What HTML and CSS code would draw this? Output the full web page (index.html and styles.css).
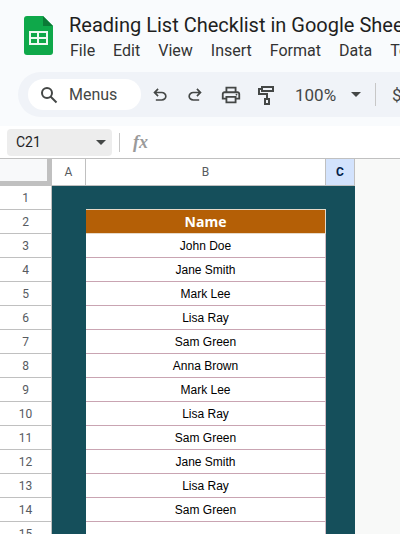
FILE: index.html
```html
<!DOCTYPE html>
<html lang="en">
<head>
  <meta charset="UTF-8">
  <meta name="viewport" content="width=device-width, initial-scale=1.0">
  <title>Reading List Checklist in Google Sheets</title>
  <link rel="stylesheet" href="styles.css">
</head>
<body>

<header class="header">
  <svg class="logo" viewBox="0 0 29 39" aria-hidden="true">
    <path fill="#0fa84a" d="M3 0h16l10 10v26a3 3 0 0 1-3 3H3a3 3 0 0 1-3-3V3a3 3 0 0 1 3-3z"/>
    <path fill="#0b7a36" d="M19 0l10 10H19z"/>
    <path fill="#effaf2" fill-rule="evenodd" d="M5 15h19v14H5zM7 17v4h6v-4zM15 17v4h7v-4zM7 23v4h6v-4zM15 23v4h7v-4z"/>
  </svg>
  <div class="heading">
    <h1 class="title">Reading List Checklist in Google Sheets</h1>
    <nav class="menu">
      <a href="#">File</a>
      <a href="#">Edit</a>
      <a href="#">View</a>
      <a href="#">Insert</a>
      <a href="#">Format</a>
      <a href="#">Data</a>
      <a href="#">Tools</a>
    </nav>
  </div>
</header>

<div class="toolbar">
  <button class="menus" type="button">
    <svg width="18" height="18" viewBox="0 0 18 18" fill="none" stroke="#444746" stroke-width="2" aria-hidden="true">
      <circle cx="7" cy="7" r="5"/>
      <path d="M10.500 10.500L16.500 16.500"/>
    </svg>
    Menus
  </button>
  <button class="tool" type="button" aria-label="Undo">
    <svg width="20" height="20" viewBox="0 -960 960 960"><path d="M280-200v-80h284q63 0 109.500-40T720-420q0-60-46.500-100T564-560H312l104 104-56 56-200-200 200-200 56 56-104 104h252q97 0 166.500 63T800-420q0 94-69.500 157T564-200H280Z"/></svg>
  </button>
  <button class="tool" type="button" aria-label="Redo">
    <svg width="20" height="20" viewBox="0 -960 960 960"><path transform="matrix(-1 0 0 1 960 0)" d="M280-200v-80h284q63 0 109.500-40T720-420q0-60-46.500-100T564-560H312l104 104-56 56-200-200 200-200 56 56-104 104h252q97 0 166.500 63T800-420q0 94-69.500 157T564-200H280Z"/></svg>
  </button>
  <button class="tool" type="button" aria-label="Print">
    <svg width="22" height="22" viewBox="0 -960 960 960"><path d="M640-640v-120H320v120h-80v-200h480v200h-80Zm80 180q17 0 28.500-11.500T760-500q0-17-11.500-28.500T720-540q-17 0-28.500 11.500T680-500q0 17 11.500 28.500T720-460Zm-80 260v-160H320v160h320Zm80 80H240v-160H80v-240q0-51 35-85.500t85-34.500h560q51 0 85.500 34.500T880-520v240H720v160Zm80-240v-160q0-17-11.500-28.500T760-560H200q-17 0-28.500 11.500T160-520v160h80v-80h480v80h80Z"/></svg>
  </button>
  <button class="tool" type="button" aria-label="Paint format">
    <svg width="18" height="22" viewBox="0 0 18 22"><path class="line" d="M5 3h11v4H5zM5 5H2v5h8v4M8 15h4v5H8z"/></svg>
  </button>
  <select class="zoom" aria-label="Zoom">
    <option>100%</option>
  </select>
  <svg class="arrow" width="10" height="5" viewBox="0 0 10 5" aria-hidden="true"><path d="M0 0h10L5 5z"/></svg>
  <span class="divider"></span>
  <button class="tool currency" type="button">$</button>
</div>

<div class="formula-bar">
  <div class="name-box">
    <input type="text" value="C21" aria-label="Name box">
    <button type="button" aria-label="Named ranges">
      <svg width="10" height="5" viewBox="0 0 10 5"><path d="M0 0h10L5 5z"/></svg>
    </button>
  </div>
  <span class="divider"></span>
  <span class="fx">fx</span>
</div>

<div class="grid">
  <table class="sheet">
    <colgroup>
      <col class="col-num">
      <col class="col-a">
      <col class="col-b">
      <col class="col-c">
    </colgroup>
    <thead>
      <tr>
        <td class="corner"></td>
        <th>A</th>
        <th>B</th>
        <th class="active">C</th>
      </tr>
    </thead>
    <tbody>
      <tr><th>1</th><td class="fill"></td><td class="fill top"></td><td class="fill"></td></tr>
      <tr><th>2</th><td class="fill"></td><td class="name">Name</td><td class="fill"></td></tr>
      <tr><th>3</th><td class="fill"></td><td>John Doe</td><td class="fill"></td></tr>
      <tr><th>4</th><td class="fill"></td><td>Jane Smith</td><td class="fill"></td></tr>
      <tr><th>5</th><td class="fill"></td><td>Mark Lee</td><td class="fill"></td></tr>
      <tr><th>6</th><td class="fill"></td><td>Lisa Ray</td><td class="fill"></td></tr>
      <tr><th>7</th><td class="fill"></td><td>Sam Green</td><td class="fill"></td></tr>
      <tr><th>8</th><td class="fill"></td><td>Anna Brown</td><td class="fill"></td></tr>
      <tr><th>9</th><td class="fill"></td><td>Mark Lee</td><td class="fill"></td></tr>
      <tr><th>10</th><td class="fill"></td><td>Lisa Ray</td><td class="fill"></td></tr>
      <tr><th>11</th><td class="fill"></td><td>Sam Green</td><td class="fill"></td></tr>
      <tr><th>12</th><td class="fill"></td><td>Jane Smith</td><td class="fill"></td></tr>
      <tr><th>13</th><td class="fill"></td><td>Lisa Ray</td><td class="fill"></td></tr>
      <tr><th>14</th><td class="fill"></td><td>Sam Green</td><td class="fill"></td></tr>
      <tr><th>15</th><td class="fill"></td><td></td><td class="fill"></td></tr>
    </tbody>
  </table>
</div>

</body>
</html>
```
FILE: styles.css
```css
* {
  box-sizing: border-box;
}

body {
  margin: 0;
  height: 100vh;
  display: flex;
  flex-direction: column;
  overflow: hidden;
  background-color: #f9fbfd;
  color: #1f1f1f;
  font-family: Roboto, Arial, sans-serif;
}

button,
input,
select {
  border: none;
  background: none;
  margin: 0;
  padding: 0;
  color: inherit;
  font-family: inherit;
}

svg {
  display: block;
  flex-shrink: 0;
  fill: #444746;
}

/* title and menus */
.header {
  display: flex;
  gap: 16px;
  padding: 12px 0 0 24px;
  flex-shrink: 0;
}

.logo {
  width: 29px;
  height: 39px;
  margin-top: 4px;
}

.heading {
  min-width: 0;
  overflow: hidden;
}

.title {
  margin: 0;
  font-size: 20px;
  line-height: 26px;
  font-weight: normal;
  white-space: nowrap;
}

.menu {
  display: flex;
  gap: 18px;
  padding-left: 1px;
}

.menu a {
  color: #333;
  font-size: 16px;
  line-height: 26px;
  text-decoration: none;
}

/* toolbar */
.toolbar {
  display: flex;
  align-items: center;
  flex-shrink: 0;
  height: 45px;
  margin: 8px 0 9px 18px;
  padding-left: 10px;
  border-radius: 23px 0 0 23px;
  background-color: #f0f3f8;
  color: #444746;
  overflow: hidden;
}

.menus {
  display: flex;
  align-items: center;
  gap: 11px;
  flex-shrink: 0;
  width: 113px;
  height: 31px;
  margin-right: 9px;
  padding-left: 12px;
  border-radius: 16px;
  background-color: #fff;
  font-size: 16px;
}

.menus svg {
  fill: none;
}

.tool {
  flex-shrink: 0;
  margin-right: 15px;
}

.line {
  fill: none;
  stroke: #444746;
  stroke-width: 2;
}

.zoom {
  appearance: none;
  flex-shrink: 0;
  width: 56px;
  margin-left: 5px;
  font-size: 17px;
}

.divider {
  flex-shrink: 0;
  width: 1px;
  height: 23px;
  background-color: #c7c7c7;
}

.toolbar .divider {
  margin: 0 16px 0 14px;
}

.currency {
  font-size: 17px;
}

/* formula bar */
.formula-bar {
  display: flex;
  align-items: center;
  flex-shrink: 0;
  height: 33px;
  padding-left: 7px;
  background-color: #fff;
  border-bottom: 1px solid #c0c0c0;
}

.formula-bar .divider {
  height: 19px;
  margin: 0 13px 0 7px;
}

.name-box {
  display: flex;
  align-items: center;
  width: 105px;
  height: 27px;
  padding: 0 6px 0 9px;
  border-radius: 4px;
  background-color: #ededed;
}

.name-box input {
  flex: 1;
  min-width: 0;
  font-size: 14px;
}

.fx {
  color: #9a9a9a;
  font-family: "Liberation Serif", serif;
  font-size: 18px;
  font-style: italic;
  font-weight: bold;
}

/* sheet */
.grid {
  flex: 1;
  min-height: 0;
  overflow: hidden;
  background-color: #f8f9f8;
}

.sheet {
  width: 355px;
  table-layout: fixed;
  border-collapse: separate;
  border-spacing: 0;
  background-color: #fff;
}

.col-num {
  width: 52px;
}

.col-a {
  width: 34px;
}

.col-b {
  width: 240px;
}

.col-c {
  width: 29px;
}

.sheet th,
.sheet td {
  height: 24px;
  padding: 0;
  text-align: center;
}

.sheet th {
  border-right: 1px solid #c0c0c0;
  border-bottom: 1px solid #c0c0c0;
  color: #575b5f;
  font-size: 12px;
  font-weight: normal;
}

.sheet td {
  border-right: 1px solid #d3bcc4;
  border-bottom: 1px solid #c9a4b2;
  color: #000;
  font-family: "Liberation Sans", Arial, sans-serif;
  font-size: 12px;
}

.sheet thead th,
.sheet .corner {
  height: 27px;
}

.sheet .corner {
  border-right: 5px solid #c0c0c0;
  border-bottom: 5px solid #c0c0c0;
  background-color: #f8f9fa;
}

.sheet .active {
  background-color: #d3e3fd;
  color: #041e49;
  font-weight: bold;
}

.sheet .fill {
  border: none;
  background-color: #154f5b;
}

.sheet .top {
  border-bottom: 1px solid #e6d9c8;
}

.sheet .name {
  border-color: #e6d9c8;
  background-color: #b45f06;
  color: #fff;
  font-family: "Open Sans", sans-serif;
  font-size: 14px;
  line-height: 20px;
  font-weight: bold;
}
```
